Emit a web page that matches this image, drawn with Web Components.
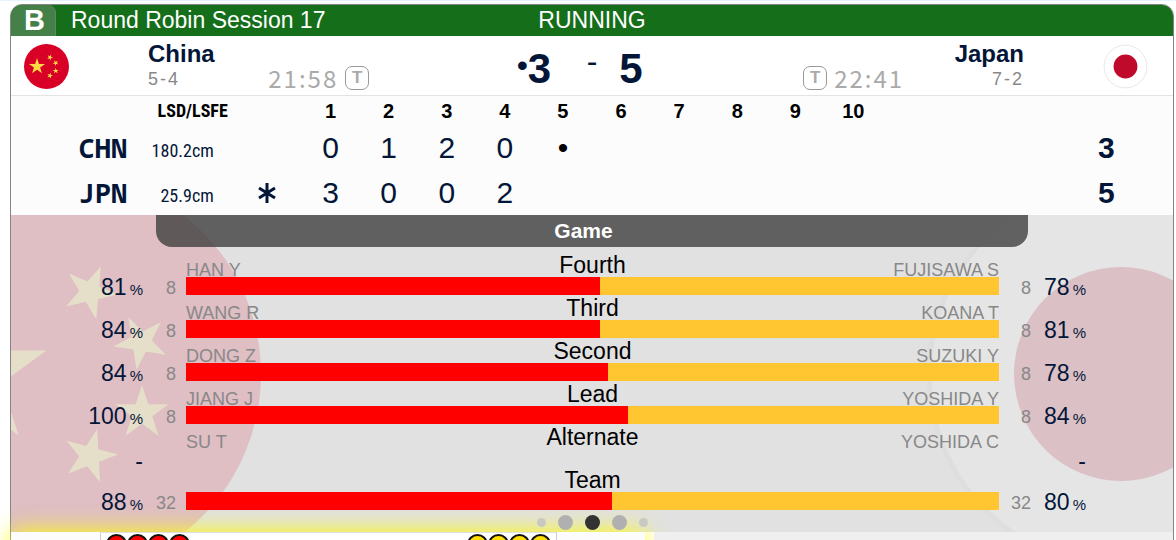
<!DOCTYPE html>
<html lang="en">
<head>
<meta charset="utf-8">
<meta name="viewport" content="width=device-width, initial-scale=1">
<title>Round Robin Session 17</title>
<style>
  html { height: 100%; }
  body {
    margin: 0; height: 100%; box-sizing: border-box; overflow: hidden;
    border-top: 1px solid #e6f4fd; padding: 3px 2px 0 10px;
    background: #fff; color: #041638;
    font-family: "Liberation Sans", Arial, sans-serif;
  }
</style>
</head>
<body>
<game-card>
  <card-header slot="header" sheet="B" session="Round Robin Session 17" status="RUNNING"></card-header>
  <score-line slot="score">
    <team-side slot="home" side="home" country="China" record="5-4" clock="21:58" flag="china"></team-side>
    <span slot="home-score">3</span>
    <span slot="away-score">5</span>
    <team-side slot="away" side="away" country="Japan" record="7-2" clock="22:41" flag="japan"></team-side>
  </score-line>
  <line-score slot="ends"></line-score>
  <stats-panel slot="stats">
    <stat-row label="Fourth" home="HAN Y" away="FUJISAWA S" home-pct="81" away-pct="78" home-shots="8" away-shots="8"></stat-row>
    <stat-row label="Third" home="WANG R" away="KOANA T" home-pct="84" away-pct="81" home-shots="8" away-shots="8"></stat-row>
    <stat-row label="Second" home="DONG Z" away="SUZUKI Y" home-pct="84" away-pct="78" home-shots="8" away-shots="8"></stat-row>
    <stat-row label="Lead" home="JIANG J" away="YOSHIDA Y" home-pct="100" away-pct="84" home-shots="8" away-shots="8"></stat-row>
    <stat-row label="Alternate" home="SU T" away="YOSHIDA C"></stat-row>
    <stat-row label="Team" home-pct="88" away-pct="80" home-shots="32" away-shots="32"></stat-row>
    <page-dots slot="dots"></page-dots>
  </stats-panel>
  <stone-strip slot="stones"></stone-strip>
</game-card>

<script>
function define(name, render) {
  customElements.define(name, class extends HTMLElement {
    connectedCallback() {
      if (this.shadowRoot) return;
      const t = document.createElement('template');
      t.innerHTML = render(this);
      this.attachShadow({ mode: 'open' }).append(t.content.cloneNode(true));
    }
  });
}

/* Five-pointed star centred on cx,cy; turn is in degrees clockwise. */
function star(cx, cy, r, turn) {
  const pts = [];
  for (let i = 0; i < 10; i++) {
    const a = (turn - 90 + i * 36) * Math.PI / 180, q = i % 2 ? r * 0.382 : r;
    pts.push((cx + q * Math.cos(a)).toFixed(1) + ',' + (cy + q * Math.sin(a)).toFixed(1));
  }
  return `<polygon points="${pts.join(' ')}"/>`;
}

const flagArt = {
  china: `<circle r="202" fill="#d80027"/><g fill="#ffda44">
    ${star(-85, 0, 76, 0)}${star(31, -82, 28, 23)}${star(82, -32, 28, -27)}${star(83, 39, 28, 0)}${star(31, 82, 28, 15)}</g>`,
  japan: `<circle r="192" fill="#fff" stroke="#d3d3d3" stroke-width="5"/><circle r="107" fill="#bf0a2c"/>`
};

define('nation-flag', el => `
  <style>
    :host { display: block; }
    svg { display: block; width: 100%; height: 100%; }
  </style>
  <svg viewBox="-202 -202 404 404" aria-hidden="true">${flagArt[el.getAttribute('nation')]}</svg>`);

define('game-card', () => `
  <style>
    :host { display: block; }
    article { border: 1px solid #858585; border-radius: 12px 12px 0 0; }
    .top { background: #fff; border-bottom: 1px solid #e3e3e3; }
  </style>
  <article>
    <slot name="header"></slot>
    <div class="top"><slot name="score"></slot></div>
    <slot name="ends"></slot>
    <slot name="stats"></slot>
    <slot name="stones"></slot>
  </article>`);

define('card-header', el => `
  <style>
    :host { display: block; background: #146e1a; color: #fff; border-radius: 11px 11px 0 0; overflow: hidden; }
    header { display: grid; grid-template-columns: 1fr auto 1fr; line-height: 31px; font-size: 23px; }
    .left { display: flex; gap: 15px; white-space: nowrap; }
    .sheet {
      box-sizing: border-box; width: 45px; text-align: center; font-size: 29px; font-weight: bold; padding-left: 3px;
      background: #468049; border: solid #5f8a60; border-width: 0 1px 0 0; border-radius: 0 8px 0 0;
    }
    h1, .status { margin: 0; font-size: inherit; font-weight: normal; line-height: 30px; }
  </style>
  <header>
    <div class="left"><span class="sheet">${el.getAttribute('sheet')}</span><h1>${el.getAttribute('session')}</h1></div>
    <span class="status">${el.getAttribute('status')}</span>
  </header>`);

define('score-line', () => `
  <style>
    :host { display: grid; grid-template-columns: 31% 1fr 32%; }
    .score { display: grid; grid-template-columns: 1fr 54px 1fr; align-items: start; padding-right: 6px; padding-left: 18px; height: 59px; }
    .home { display: flex; justify-content: flex-end; align-items: flex-start; padding-right: 14px; }
    .num { font-size: 42px; font-weight: bold; line-height: 66px; }
    .hammer { font-size: 32px; line-height: 58px; }
    .dash { font-size: 32px; line-height: 50px; text-align: center; }
  </style>
  <slot name="home"></slot>
  <div class="score">
    <div class="home"><span class="hammer">•</span><span class="num"><slot name="home-score"></slot></span></div>
    <span class="dash">-</span>
    <span class="num"><slot name="away-score"></slot></span>
  </div>
  <slot name="away"></slot>`);

define('team-side', el => `
  <style>
    :host { display: flex; min-width: 0; }
    nation-flag { width: 45px; height: 45px; margin-top: 8px; flex: none; }
    .who { margin-top: 5px; }
    h2 { margin: 0; font-size: 24px; line-height: 26px; }
    .record { color: #888; font-size: 18px; line-height: 24px; letter-spacing: 2px; }
    .clock { display: flex; align-items: center; align-self: flex-end; gap: 7px; height: 24px; margin-bottom: 5px; color: #aaa; }
    time { font-family: "Noto Sans CJK SC", sans-serif; font-size: 24px; line-height: 24px; letter-spacing: 2px; }
    button {
      box-sizing: border-box; width: 24px; height: 24px; padding: 0; border: 1px solid #999; border-radius: 7px;
      background: none; color: inherit; font: bold 17px/22px "Liberation Sans", Arial, sans-serif;
    }
    .home { padding: 0 2px 0 13px; }
    .away { padding: 0 25px 0 2px; flex-direction: row-reverse; }
    .row { display: flex; flex: 1; }
    .row .who { margin-left: 79px; margin-right: 79px; }
    .home .who { margin-right: auto; }
    .away .who { margin-left: auto; text-align: right; }
    .away .clock { flex-direction: row-reverse; }
  </style>
  <div class="row ${el.getAttribute('side')}">
    <nation-flag nation="${el.getAttribute('flag')}"></nation-flag>
    <div class="who"><h2>${el.getAttribute('country')}</h2><div class="record">${el.getAttribute('record')}</div></div>
    <div class="clock"><time>${el.getAttribute('clock')}</time><button type="button" aria-label="Timeout">T</button></div>
  </div>`);

const ends = [1, 2, 3, 4, 5, 6, 7, 8, 9, 10];
const lines = [
  { code: 'CHN', lsd: '180.2cm', hammer: false, ends: [0, 1, 2, 0, '•'], total: 3 },
  { code: 'JPN', lsd: '25.9cm', hammer: true, ends: [3, 0, 0, 2], total: 5 }
];
define('line-score', () => `
  <style>
    :host { display: block; background: #fcfcfc; }
    table { width: 100%; table-layout: fixed; border-collapse: collapse; text-align: center; }
    th, td { padding: 0; }
    tr { height: 45px; }
    thead tr { height: 29px; }
    thead th { font-size: 20px; line-height: 22px; color: #000; }
    tbody td, tbody th { font-size: 30px; line-height: 34px; }
    col.code { width: 10%; } col.lsd { width: 9%; } col.hammer { width: 6%; }
    col.end { width: 5%; } col.gap { width: 13%; } col.total { width: 12%; }
    td.lsd, th.lsd { font-family: "Roboto Condensed", "Open Sans Condensed", "Liberation Sans", sans-serif; text-align: right; white-space: nowrap; }
    th.lsd { font-size: 18px; padding-right: 4px; }
    td.lsd { font-size: 18px; padding-right: 18px; padding-top: 6px; }
    tbody .code { text-align: right; font: bold 27px/34px "Noto Sans Mono", "DejaVu Sans Mono", monospace; }
    td.total { font-weight: bold; padding-left: 6px; }
    tbody .live { color: #000; }
    svg { display: block; margin: auto; width: 18px; height: 22px; }
  </style>
  <table>
    <colgroup><col class="code"><col class="lsd"><col class="hammer"><col class="end" span="10"><col class="gap"><col class="total"></colgroup>
    <thead><tr><th></th><th class="lsd">LSD/LSFE</th><th></th>
      ${ends.map(n => `<th>${n}</th>`).join('')}<th></th><th></th></tr></thead>
    <tbody>${lines.map(l => `<tr>
      <th class="code" scope="row">${l.code}</th><td class="lsd">${l.lsd}</td>
      <td>${l.hammer ? `<svg viewBox="0 0 18 22" role="img" aria-label="Hammer" stroke="#041638" stroke-width="3"><path d="M9 1v20M1 6l16 10M17 6L1 16"/></svg>` : ''}</td>
      ${ends.map((n, i) => `<td${l.ends[i] === '•' ? ' class="live"' : ''}>${l.ends[i] ?? ''}</td>`).join('')}
      <td></td><td class="total">${l.total}</td></tr>`).join('')}</tbody>
  </table>`);

define('stats-panel', () => `
  <style>
    :host { display: block; position: relative; background: #e1e1e1; }
    .art { position: absolute; inset: 0; overflow: hidden; }
    nation-flag { position: absolute; top: 50%; width: 404px; height: 404px; margin-top: -202px; opacity: .15; }
    .l { left: -154px; } .r { right: -150px; }
    .body { position: relative; z-index: 2; }
    h3 {
      margin: 0 145px; height: 32px; line-height: 32px; font-size: 21px; text-align: center;
      color: #fff; background: rgba(64, 64, 64, .8); border-radius: 0 0 16px 16px; text-indent: -17px;
    }
    .rows { padding-top: 8px; }
  </style>
  <div class="art"><nation-flag class="l" nation="china"></nation-flag><nation-flag class="r" nation="japan"></nation-flag></div>
  <div class="body">
    <h3>Game</h3>
    <div class="rows"><slot></slot></div>
    <slot name="dots"></slot>
  </div>`);

define('stat-row', el => {
  const a = n => el.getAttribute(n) || '';
  const pct = v => v ? `${v}<small>%</small>` : '-';
  return `
  <style>
    :host { display: grid; grid-template-columns: 132px 33px 1fr 32px 55px; align-items: end; height: 43px; padding-right: 87px; }
    .pct { display: flex; justify-content: flex-end; align-items: baseline; gap: 3px; font-size: 23px; line-height: 18px; }
    .pct small { font-size: 15px; line-height: 16px; }
    .shots { font-size: 18px; line-height: 20px; text-align: right; color: #888; }
    .main { margin-left: 10px; height: 43px; }
    .names { display: grid; grid-template-columns: 1fr auto 1fr; height: 22px; font-size: 18px; color: #888; align-items: end; line-height: 14px; }
    .label { align-self: start; font-size: 23px; line-height: 20px; color: #000; }
    .away { text-align: right; }
    .bar { display: flex; height: 18px; background: #ffc632; }
    .bar i { background: #f00; }
  </style>
  <span class="pct">${pct(a('home-pct'))}</span>
  <span class="shots">${a('home-shots')}</span>
  <div class="main">
    <div class="names"><span>${a('home')}</span><span class="label">${a('label')}</span><span class="away">${a('away')}</span></div>
    ${a('home-pct') ? `<div class="bar"><i style="flex:${a('home-pct')}"></i><span style="flex:${a('away-pct')}"></span></div>` : ''}
  </div>
  <span class="shots">${a('away-shots')}</span>
  <span class="pct">${pct(a('away-pct'))}</span>`;
});

define('page-dots', () => `
  <style>
    :host { display: flex; justify-content: center; align-items: center; gap: 12px; padding: 2px 0; }
    button { padding: 0; border: 0; border-radius: 50%; width: 15px; height: 15px; background: #b0b0b0; }
    .far { width: 9px; height: 9px; background: #c9c9c3; }
    .on { background: #333; }
  </style>
  <button class="far" aria-label="Page 1"></button><button aria-label="Page 2"></button>
  <button class="on" aria-label="Page 3" aria-current="true"></button>
  <button aria-label="Page 4"></button><button class="far" aria-label="Page 5"></button>`);

define('stone-strip', () => `
  <style>
    :host { display: grid; grid-template-columns: 634px 1fr; gap: 9px; height: 60px; }
    .panel { position: relative; z-index: 1; display: grid; grid-template-columns: 89px 1fr 88px; background: #fcfcfc; box-shadow: 0 0 24px #ff0; }
    .stones { display: flex; justify-content: space-between; background: #fff; border: 1px solid #ccc; border-top-color: #e0e0e0; padding: 1px 5px; }
    .set { display: flex; }
    .set i { box-sizing: border-box; width: 21px; height: 21px; border: 2px solid #111; border-radius: 50%; background: var(--stone); }
    .red { --stone: #f00; } .yellow { --stone: #ffde00; }
    .rest { position: relative; z-index: 2; background: #efefef; }
  </style>
  <div class="panel">
    <span></span>
    <div class="stones"><div class="set red"><i></i><i></i><i></i><i></i></div><div class="set yellow"><i></i><i></i><i></i><i></i></div></div>
    <span></span>
  </div>
  <div class="rest"></div>`);
</script>
</body>
</html>
